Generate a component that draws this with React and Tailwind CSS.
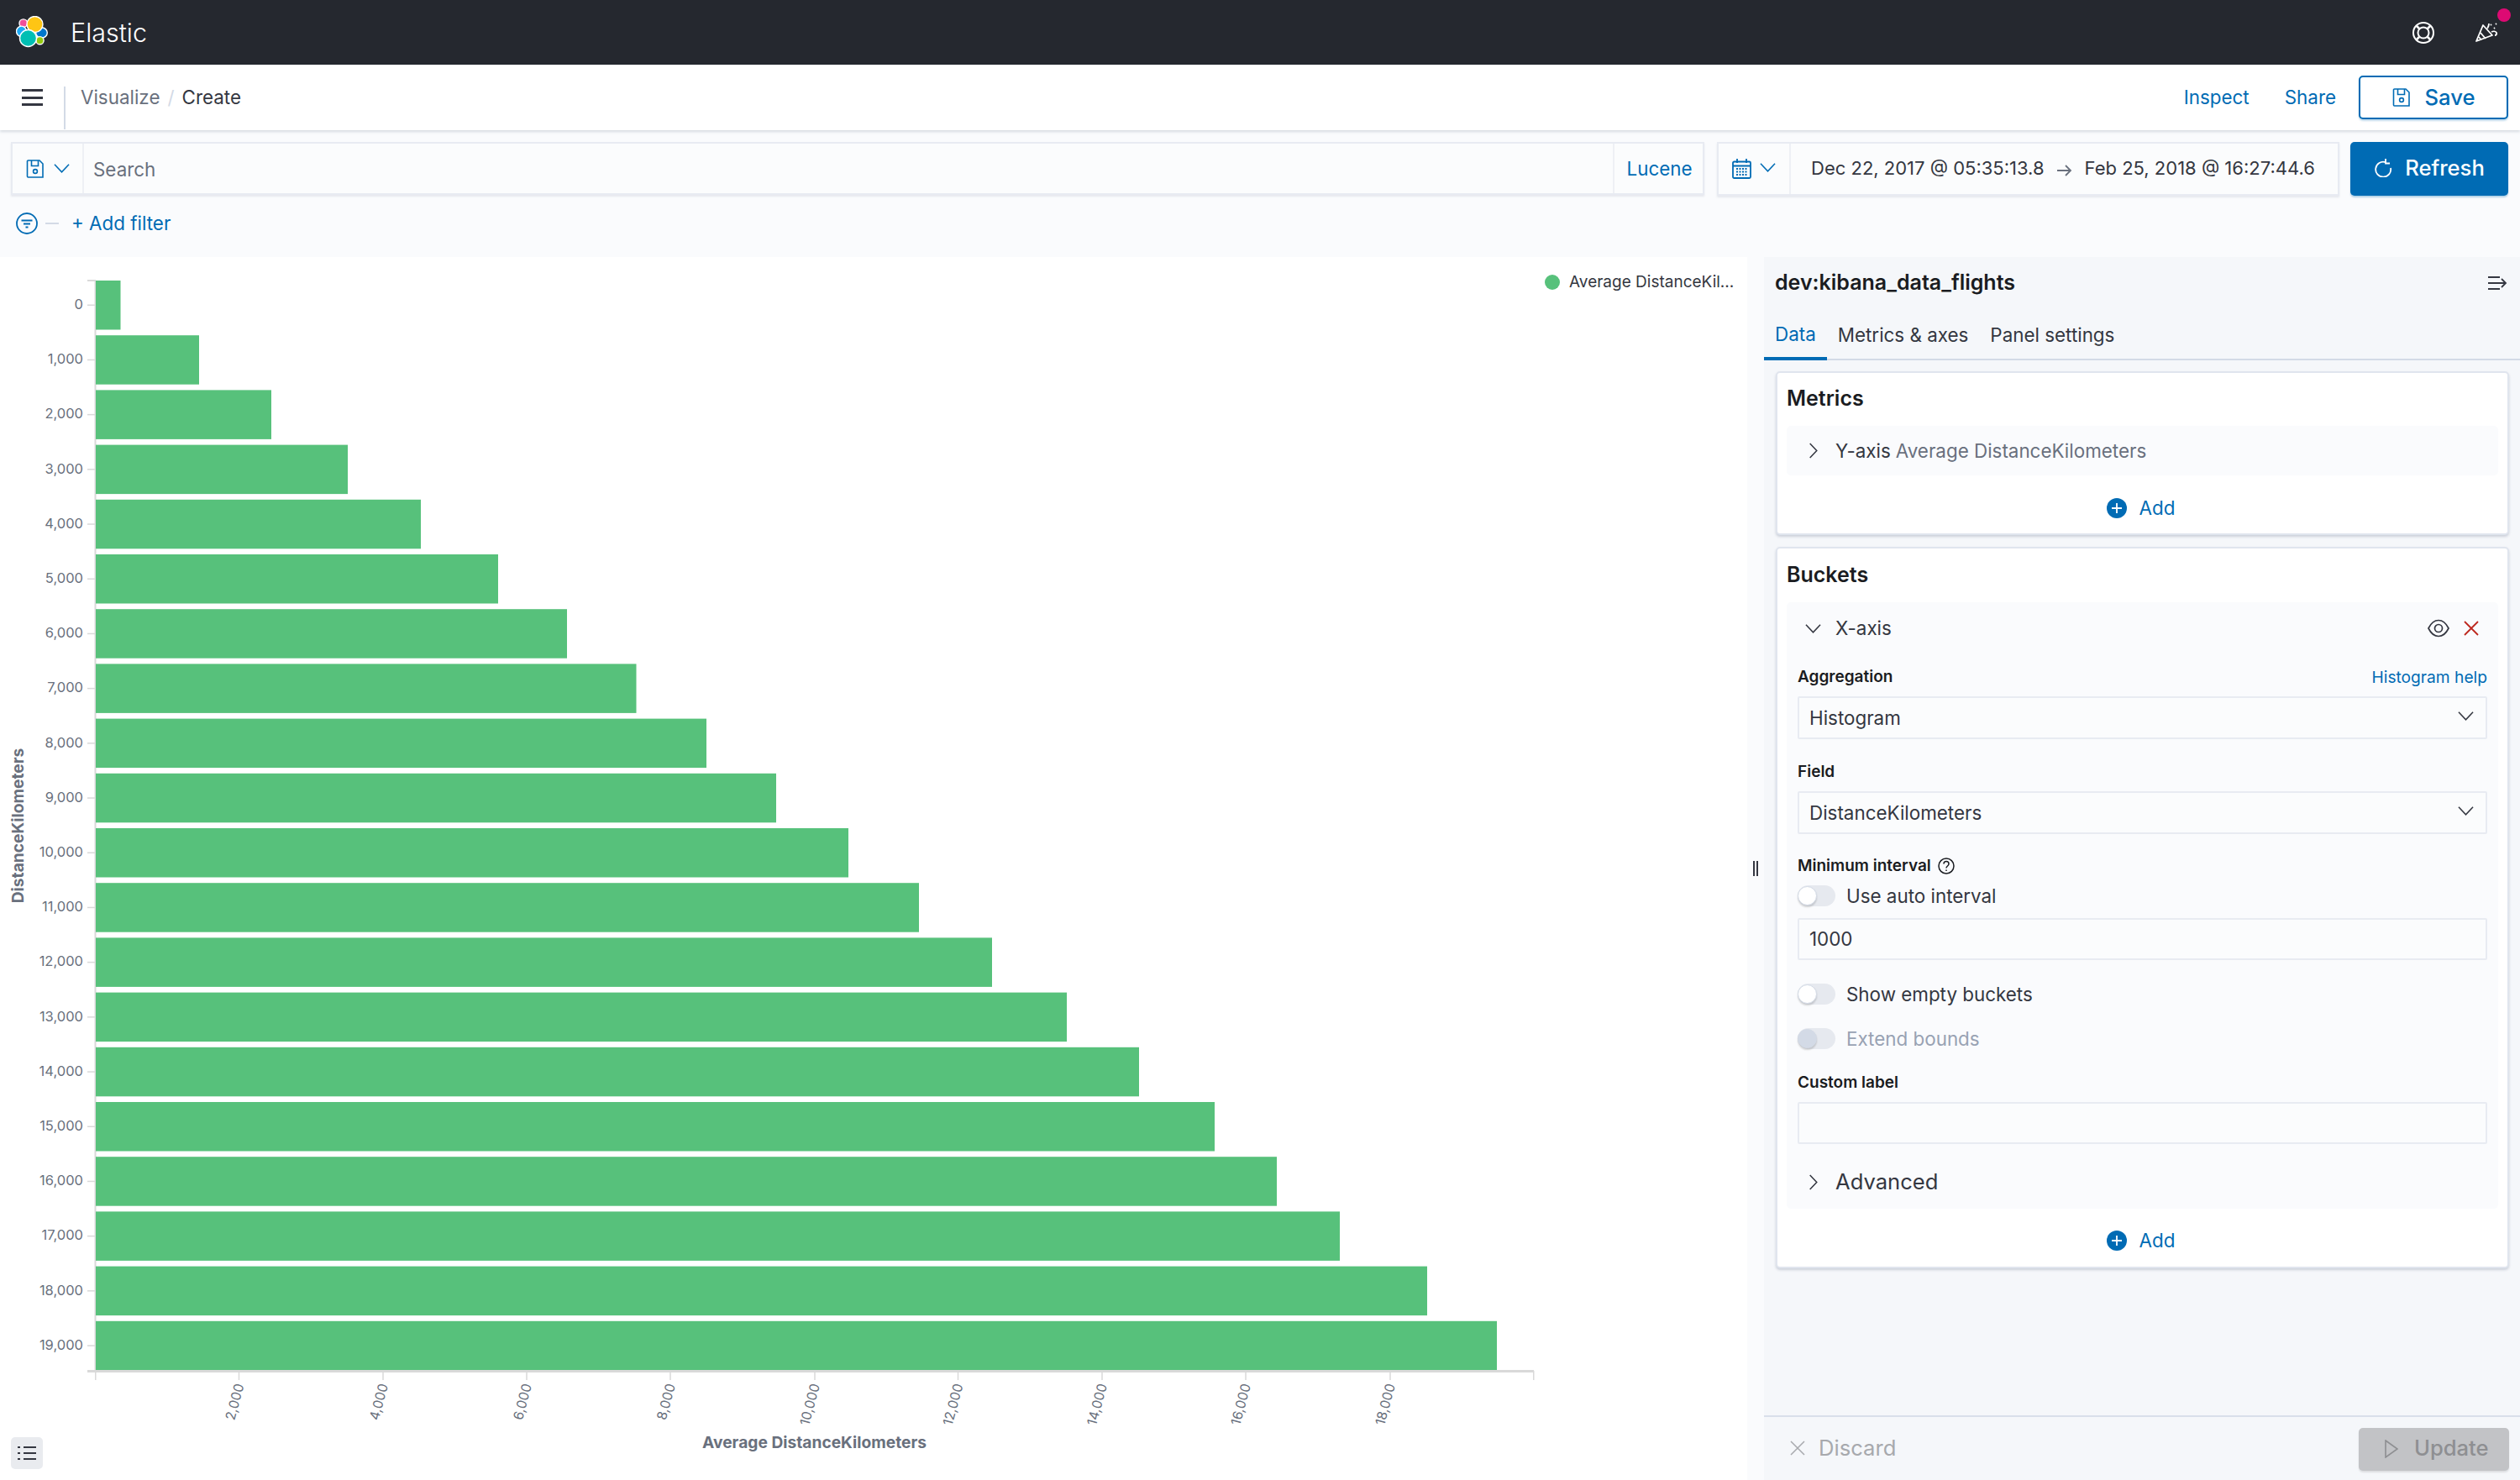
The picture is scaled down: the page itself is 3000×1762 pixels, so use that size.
import React from 'react';

const barEnds = [143.5, 237, 323, 414, 501, 593, 675, 757.5, 841, 924, 1010, 1094, 1181, 1270, 1356, 1446, 1520, 1595, 1699, 1782];
const xTicks = [
  ['2,000', 284.5],
  ['4,000', 456],
  ['6,000', 627],
  ['8,000', 798],
  ['10,000', 970],
  ['12,000', 1140.5],
  ['14,000', 1312],
  ['16,000', 1483],
  ['18,000', 1655],
];

const fmt = (n) => n.toLocaleString('en-US');

const Chevron = ({ dir = 'down', className = '' }) => (
  <svg viewBox="0 0 20 20" className={className} fill="none" stroke="currentColor" strokeWidth="1.6">
    {dir === 'down' ? <path d="M1 5l9 9.5L19 5" /> : <path d="M6 1l8.5 9L6 19" />}
  </svg>
);

const SaveIcon = ({ className = '' }) => (
  <svg viewBox="0 0 22 22" className={className} fill="none" stroke="currentColor" strokeWidth="1.6">
    <path d="M2.5 1h13.5l4 4v16H2.500a1 1 0 0 1-1-1V2a1 1 0 0 1 1-1z" />
    <path d="M6.500 1v6.500h8V1" />
    <circle cx="11" cy="14" r="2.400" />
  </svg>
);

const PlusCircle = () => (
  <svg viewBox="0 0 24 24" className="h-[24px] w-[24px]">
    <circle cx="12" cy="12" r="12" fill="#006bb4" />
    <path d="M12 6v12M6 12h12" stroke="#fff" strokeWidth="1.800" />
  </svg>
);

const Toggle = ({ disabled }) => (
  <span className="flex h-[25px] w-[45px] shrink-0 items-center rounded-full bg-[#e6e9ef]">
    <span className={`h-[23px] w-[23px] rounded-full border border-[#d3dae6] shadow-[0_2px_2px_rgba(0,0,0,0.15)] ${disabled ? 'bg-[#d3dae6]' : 'bg-white'}`} />
  </span>
);

const FieldLabel = ({ children, className = '' }) => (
  <div className={`flex h-[22px] items-center text-[19px] leading-[22px] font-semibold text-[#1a1c21] ${className}`}>{children}</div>
);

const SelectBox = ({ value, className = '' }) => (
  <div className={`flex h-[51px] items-center justify-between rounded-[2px] border-2 border-[#e8ebf2] bg-[#fbfcfd] pr-[14px] pl-[12px] text-[22.400px] text-[#343741] ${className}`}>
    <span>{value}</span>
    <Chevron className="mb-[4px] h-[19px] w-[19px]" />
  </div>
);

const AddRow = ({ top }) => (
  <div className={`flex h-[71px] items-center justify-center gap-[15px] pr-[4px] text-[22.400px] text-[#006bb4] ${top}`}>
    <PlusCircle />
    <span>Add</span>
  </div>
);

const Logo = () => (
  <svg viewBox="0 0 40 40" className="h-[40px] w-[40px]">
    <g stroke="#fff" strokeWidth="1.400">
      <ellipse cx="8.800" cy="8.700" rx="4.800" ry="4.800" fill="#f04e98" />
      <ellipse cx="6.500" cy="18.300" rx="6" ry="6.200" fill="#1ba9f5" />
      <ellipse cx="30.500" cy="20" rx="6.800" ry="6.200" fill="#0077cc" />
      <ellipse cx="28.500" cy="29.200" rx="4.600" ry="4.600" fill="#93c90e" />
      <circle cx="22.500" cy="10" r="9.500" fill="#fec514" />
      <circle cx="14.500" cy="26.500" r="10" fill="#00bfb3" />
    </g>
  </svg>
);

const Chart = () => (
  <svg viewBox="0 305 2080 1457" className="block h-[1457px] w-[2080px]" style={{ fontFamily: 'Inter, sans-serif' }}>
    <defs>
      <clipPath id="xLabels">
        <rect x="114" y="1642" width="1720" height="53" />
      </clipPath>
    </defs>
    <rect x="112.500" y="333" width="2" height="1298" fill="#d9d9d9" />
    <rect x="104" y="332" width="10" height="2" fill="#d9d9d9" />
    {barEnds.map((end, i) => {
      const y = 333 + i * 65.2;
      return (
        <g key={i}>
          <rect x="114" y={y} width={end - 114} height="58.500" fill="#57c17b" />
          <rect x="104" y={y + 28.500} width="9" height="1.500" fill="#d9d9d9" />
          <text x="99" y={y + 34} textAnchor="end" fontSize="16.500" fill="#69707d">{fmt(i * 1000)}</text>
        </g>
      );
    })}
    <rect x="104" y="1630" width="1722" height="3" fill="#d9d9d9" />
    <rect x="113" y="1631" width="1.500" height="11" fill="#d9d9d9" />
    <rect x="1825" y="1631" width="1.500" height="11" fill="#d9d9d9" />
    {xTicks.map(([label, x]) => (
      <rect key={label} x={x - 0.75} y="1631" width="1.500" height="11" fill="#d9d9d9" />
    ))}
    <g clipPath="url(#xLabels)">
      {xTicks.map(([label, x]) => (
        <text key={label} x={x + 6} y="1648" textAnchor="end" fontSize="16" fill="#69707d" transform={`rotate(-75 ${x + 6} 1648)`}>{label}</text>
      ))}
    </g>
    <text x="969.500" y="1723" textAnchor="middle" fontSize="19.200" fontWeight="700" fill="#69707d">Average DistanceKilometers</text>
    <text x="0" y="0" textAnchor="middle" fontSize="19.200" fontWeight="700" fill="#69707d" transform="translate(28 982) rotate(-90)">DistanceKilometers</text>
  </svg>
);

export default function App() {
  return (
    <div className="h-[1762px] w-[3000px] overflow-hidden bg-[#fafbfd] font-['Inter',sans-serif] text-[#343741]">
      <header className="flex h-[77px] items-center justify-between bg-[#25282f] pl-[19px] text-white">
        <div className="flex items-center gap-[25px]">
          <Logo />
          <span className="text-[30.500px] font-light">Elastic</span>
        </div>
        <div className="relative flex h-full items-center">
          <svg viewBox="0 0 28 28" className="mr-[48px] h-[28px] w-[28px]" fill="none" stroke="#fff" strokeWidth="2">
            <circle cx="14" cy="14" r="12" />
            <circle cx="14" cy="14" r="6.500" />
            <path d="M5.500 5.500l4 4M22.500 5.500l-4 4M5.500 22.500l4-4M22.500 22.500l-4-4" strokeWidth="2.500" />
          </svg>
          <svg viewBox="0 0 28 26" className="mr-[25px] mt-[-1px] h-[26px] w-[28px]" fill="none" stroke="#fff" strokeWidth="1.800">
            <path d="M1 24L9 5l11 12z" strokeLinejoin="round" />
            <path d="M6 14l6 7M4 19l3 3.500" />
            <path d="M14 9c1-2 2-3 2-6M19 13c2-1 5-1 6 1s-1 3-2 3M22 9l1-1M18 5l1-1M24 4l1-1" />
          </svg>
          <span className="absolute top-[10px] right-[11px] h-[16px] w-[16px] rounded-full bg-[#dd0a73]" />
        </div>
      </header>

      <nav className="relative flex h-[78px] items-stretch justify-between bg-white pr-[14px] shadow-[0_2px_3px_rgba(152,162,179,0.35)]">
        <div className="flex items-stretch">
          <div className="flex w-[76px] items-start justify-center pt-[29px] pl-[1px]">
            <div className="flex h-[20px] w-[25px] flex-col justify-between">
              <span className="h-[3px] bg-[#343741]" />
              <span className="h-[3px] bg-[#343741]" />
              <span className="h-[3px] bg-[#343741]" />
            </div>
          </div>
          <div className="mt-[26px] mb-[1px] w-[2px] bg-[#d3dae6]" />
          <div className="flex items-start pt-[23px] pl-[18px] text-[22.400px] leading-[32px]">
            <span className="text-[#69707d]">Visualize</span>
            <span className="mx-[9px] text-[#d3dae6]">/</span>
            <span>Create</span>
          </div>
        </div>
        <div className="flex items-start pt-[13px] text-[22.400px] text-[#006bb4]">
          <span className="mt-[10px] mr-[42px] leading-[32px]">Inspect</span>
          <span className="mt-[10px] mr-[27px] leading-[32px]">Share</span>
          <div className="flex h-[52px] w-[178px] items-center justify-center gap-[17px] rounded-[5px] border-2 border-[#006bb4] bg-white text-[25.600px] font-medium shadow-[0_2px_2px_rgba(0,107,180,0.25)]">
            <SaveIcon className="h-[22px] w-[22px]" />
            <span>Save</span>
          </div>
        </div>
      </nav>

      <div className="flex gap-[15px] pt-[14px] pr-[14px] pl-[13px]">
        <div className="flex h-[63px] flex-1 items-stretch border-2 border-[#e8ebf2] bg-[#fbfcfd] text-[22.400px] shadow-[0_2px_2px_rgba(152,162,179,0.2)]">
          <div className="flex w-[85px] items-center justify-center gap-[11px] border-r-2 border-[#eef0f5] text-[#006bb4]">
            <SaveIcon className="h-[22px] w-[22px]" />
            <Chevron className="h-[19px] w-[19px]" />
          </div>
          <div className="flex flex-1 items-center pt-[2px] pl-[11px] text-[#69707d]">Search</div>
          <div className="flex w-[107px] items-center justify-center border-l-2 border-[#eef0f5] pl-[2px] text-[#006bb4]">Lucene</div>
        </div>
        <div className="flex w-[741px] items-stretch border-2 border-[#e8ebf2] bg-[#fbfcfd] text-[22px] shadow-[0_2px_2px_rgba(152,162,179,0.2)]">
          <div className="flex w-[86px] items-center justify-center gap-[10px] border-r-2 border-[#eef0f5] text-[#006bb4]">
            <svg viewBox="0 0 23 24" className="h-[24px] w-[23px]" fill="none" stroke="currentColor" strokeWidth="1.800">
              <rect x="1" y="3.500" width="21" height="19.500" rx="1.500" />
              <path d="M1 8.500h21M6 0v5M17 0v5" />
              <path d="M5 12h13M5 15.500h13M5 19h13" strokeWidth="2" strokeDasharray="2 1.500" />
            </svg>
            <Chevron className="mb-[4px] h-[19px] w-[19px]" />
          </div>
          <div className="flex flex-1 items-center pb-[2px] pl-[24px] whitespace-nowrap">
            <span>Dec 22, 2017 @ 05:35:13.8</span>
            <svg viewBox="0 0 18 14" className="mx-[15px] mt-[6px] h-[14px] w-[18px]" fill="none" stroke="#69707d" strokeWidth="1.800">
              <path d="M0 7h16M10 1l6 6-6 6" />
            </svg>
            <span>Feb 25, 2018 @ 16:27:44.6</span>
          </div>
        </div>
        <div className="-ml-[2px] flex h-[64px] w-[188px] items-center justify-center gap-[15px] rounded-[5px] bg-[#006bb4] pb-[2px] text-[25.600px] font-medium text-white shadow-[0_2px_2px_rgba(0,107,180,0.3)]">
          <svg viewBox="0 0 22 22" className="h-[22px] w-[22px]" fill="none" stroke="currentColor" strokeWidth="1.800">
            <path d="M14 4.200A9 9 0 1 0 20 11" />
            <path d="M14 0v5.500h5" />
          </svg>
          <span>Refresh</span>
        </div>
      </div>

      <div className="flex h-[66px] items-center pl-[19px] text-[22.400px] text-[#006bb4]">
        <svg viewBox="0 0 26 26" className="h-[26px] w-[26px]" fill="none" stroke="currentColor" strokeWidth="1.800">
          <circle cx="13" cy="13" r="12" />
          <path d="M6.500 9.500h13M9 13.500h8M11.500 17.500h3" />
        </svg>
        <span className="mx-[9px] h-[2px] w-[16px] bg-[#d3dae6]" />
        <span className="ml-[6px]">+ Add filter</span>
      </div>

      <div className="mt-[7px] flex h-[1457px]">
        <div className="relative w-[2080px] bg-white">
          <Chart />
          <div className="absolute top-[21px] left-[1839px] flex items-center gap-[11px] text-[19px] leading-[18px]">
            <span className="h-[18px] w-[18px] rounded-full bg-[#57c17b]" />
            <span>Average DistanceKil...</span>
          </div>
          <div className="absolute top-[1405px] left-[13px] flex h-[38px] w-[38px] items-center justify-center rounded-[5px] bg-[#e9ebef]">
            <svg viewBox="0 0 22 18" className="h-[18px] w-[22px]" fill="none" stroke="#343741" strokeWidth="2">
              <path d="M7 2h15M7 9h15M7 16h15M0 2h3M0 9h3M0 16h3" />
            </svg>
          </div>
        </div>

        <div className="flex w-[20px] items-center justify-center gap-[2px] pb-[1px]">
          <span className="h-[18px] w-[2px] bg-[#343741]" />
          <span className="h-[18px] w-[2px] bg-[#343741]" />
        </div>

        <div className="flex w-[900px] flex-col bg-[#f5f7fa]">
          <div className="flex h-[62px] items-center justify-between pr-[15px] pl-[13px]">
            <span className="text-[25px] font-semibold text-[#1a1c21]">dev:kibana_data_flights</span>
            <svg viewBox="0 0 23 16" className="h-[16px] w-[23px]" fill="none" stroke="#343741" strokeWidth="1.800">
              <path d="M0 1h14M0 15h14M0 8h21M16 3l5 5-5 5" />
            </svg>
          </div>
          <div className="flex h-[61px] border-b-2 border-[#d3dae6] text-[22.400px]">
            <span className="-mb-[2px] flex items-center border-b-4 border-[#006bb4] px-[13px] pt-[2px] text-[#006bb4]">Data</span>
            <span className="flex items-center px-[13px] pt-[2px]">Metrics &amp; axes</span>
            <span className="flex items-center px-[13px] pt-[2px]">Panel settings</span>
          </div>

          <div className="flex flex-col gap-[14px] pt-[13px] pr-[13px] pl-[14px]">
            <section className="h-[195px] rounded-[5px] border-2 border-[#e0e5ee] bg-white px-[11px] shadow-[0_2px_3px_rgba(152,162,179,0.45)]">
              <h3 className="mt-[14px] flex h-[33px] items-center text-[25px] font-semibold text-[#1a1c21]">Metrics</h3>
              <div className="mt-[16px] flex h-[59px] items-center rounded-[5px] bg-[#fafbfd] pl-[22px] text-[22.400px]">
                <Chevron dir="right" className="mr-[17px] h-[19px] w-[19px]" />
                <span>Y-axis</span>
                <span className="ml-[6px] text-[#69707d]">Average DistanceKilometers</span>
              </div>
              <AddRow top="pt-[7px]" />
            </section>

            <section className="h-[859px] rounded-[5px] border-2 border-[#e0e5ee] bg-white px-[11px] shadow-[0_2px_3px_rgba(152,162,179,0.45)]">
              <h3 className="mt-[15px] flex h-[33px] items-center text-[25px] font-semibold text-[#1a1c21]">Buckets</h3>
              <div className="mt-[16px] h-[722px] rounded-[5px] bg-[#fafbfd] px-[13px]">
                <div className="flex h-[62px] items-center pl-[9px] text-[22.400px]">
                  <Chevron className="mr-[17px] h-[19px] w-[19px]" />
                  <span className="flex-1">X-axis</span>
                  <svg viewBox="0 0 26 22" className="mr-[17px] h-[22px] w-[26px]" fill="none" stroke="#343741" strokeWidth="1.700">
                    <path d="M1 11c3-6 7-9.500 12-9.500S22 5 25 11c-3 6-7 9.500-12 9.500S4 17 1 11z" />
                    <circle cx="13" cy="11" r="4.500" />
                  </svg>
                  <svg viewBox="0 0 18 18" className="mr-[10px] h-[18px] w-[18px]" fill="none" stroke="#bd271e" strokeWidth="1.800">
                    <path d="M1 1l16 16M17 1L1 17" />
                  </svg>
                </div>

                <div className="mt-[16px] flex h-[22px] items-center justify-between">
                  <FieldLabel>Aggregation</FieldLabel>
                  <span className="text-[19.200px] leading-[22px] text-[#006bb4]">Histogram help</span>
                </div>
                <SelectBox value="Histogram" className="mt-[12px]" />

                <FieldLabel className="mt-[28px]">Field</FieldLabel>
                <SelectBox value="DistanceKilometers" className="mt-[12px]" />

                <FieldLabel className="mt-[27px]">
                  Minimum interval
                  <svg viewBox="0 0 20 22" className="ml-[8px] h-[22px] w-[20px]" fill="none" stroke="#1a1c21" strokeWidth="1.500">
                    <circle cx="10" cy="11" r="9" />
                    <path d="M7 8.500c0-2 1.500-3 3-3s3 1 3 3c0 2.500-3 2.500-3 5M10 15.500v1.500" />
                  </svg>
                </FieldLabel>
                <div className="mt-[12px] flex h-[25px] items-center gap-[13px] text-[22.400px]">
                  <Toggle />
                  <span>Use auto interval</span>
                </div>
                <div className="mt-[14px] flex h-[50px] items-center rounded-[2px] border-2 border-[#e8ebf2] bg-[#fbfcfd] pl-[12px] text-[22.400px]">1000</div>
                <div className="mt-[28px] flex h-[25px] items-center gap-[13px] text-[22.400px]">
                  <Toggle />
                  <span>Show empty buckets</span>
                </div>
                <div className="mt-[28px] flex h-[25px] items-center gap-[13px] text-[22.400px] text-[#98a2b3]">
                  <Toggle disabled />
                  <span>Extend bounds</span>
                </div>
                <FieldLabel className="mt-[29px]">Custom label</FieldLabel>
                <div className="mt-[12px] h-[50px] rounded-[2px] border-2 border-[#e8ebf2] bg-[#fbfcfd]" />
                <div className="mt-[25px] flex items-center pl-[9px] text-[25.600px] leading-[40px]">
                  <Chevron dir="right" className="mr-[17px] h-[19px] w-[19px]" />
                  <span>Advanced</span>
                </div>
              </div>
              <AddRow top="pt-[5px]" />
            </section>
          </div>

          <div className="mt-auto flex h-[78px] items-center justify-between border-t-2 border-[#d9dfea] pr-[13px] pl-[31px]">
            <div className="flex items-center gap-[16px] pb-[2px] text-[25.600px] text-[#a7a9ad]">
              <svg viewBox="0 0 18 18" className="h-[18px] w-[18px]" fill="none" stroke="currentColor" strokeWidth="1.500">
                <path d="M1 1l16 16M17 1L1 17" />
              </svg>
              <span>Discard</span>
            </div>
            <div className="flex h-[51px] w-[179px] items-center gap-[19px] rounded-[5px] bg-[#c2c3c6] pb-[1px] pl-[31px] text-[25.600px] font-medium text-[#8e8f92] shadow-[0_2px_2px_rgba(0,0,0,0.1)]">
              <svg viewBox="0 0 16 22" className="h-[22px] w-[16px]" fill="none" stroke="currentColor" strokeWidth="1.600">
                <path d="M1 1l14 10L1 21z" />
              </svg>
              <span>Update</span>
            </div>
          </div>
        </div>
      </div>
    </div>
  );
}
